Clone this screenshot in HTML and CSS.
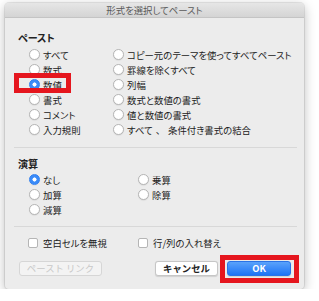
FILE: index.html
```html
<!DOCTYPE html>
<html lang="ja">
<head>
    <meta charset="UTF-8">
    <title>形式を選択してペースト</title>
    <link rel="stylesheet" href="styles.css">
</head>
<body>
    <div class="dialog">
        <div class="titlebar">形式を選択してペースト</div>
        <div class="content">
            <div class="group-label">ペースト</div>
            <div class="paste-grid">
                <div class="col">
                    <div class="opt"><span class="radio"></span>すべて</div>
                    <div class="opt"><span class="radio"></span>数式</div>
                    <div class="opt"><span class="radio on"></span>数値</div>
                    <div class="opt"><span class="radio"></span>書式</div>
                    <div class="opt"><span class="radio"></span>コメント</div>
                    <div class="opt"><span class="radio"></span>入力規則</div>
                </div>
                <div class="col">
                    <div class="opt"><span class="radio"></span>コピー元のテーマを使ってすべてペースト</div>
                    <div class="opt"><span class="radio"></span>罫線を除くすべて</div>
                    <div class="opt"><span class="radio"></span>列幅</div>
                    <div class="opt"><span class="radio"></span>数式と数値の書式</div>
                    <div class="opt"><span class="radio"></span>値と数値の書式</div>
                    <div class="opt"><span class="radio"></span>すべて<span class="fw">、</span>条件付き書式の結合</div>
                </div>
            </div>

            <div class="sep"></div>

            <div class="group-label calc-label">演算</div>
            <div class="calc-grid">
                <div class="col">
                    <div class="opt"><span class="radio on"></span>なし</div>
                    <div class="opt"><span class="radio"></span>加算</div>
                    <div class="opt"><span class="radio"></span>減算</div>
                </div>
                <div class="col">
                    <div class="opt"><span class="radio"></span>乗算</div>
                    <div class="opt"><span class="radio"></span>除算</div>
                </div>
            </div>

            <div class="sep sep2"></div>

            <div class="check-row">
                <div class="opt"><span class="check"></span>空白セルを無視</div>
                <div class="opt"><span class="check"></span>行/列の入れ替え</div>
            </div>

            <div class="buttons">
                <button class="btn disabled">ペースト リンク</button>
                <div class="right">
                    <button class="btn">キャンセル</button>
                    <button class="btn primary">OK</button>
                </div>
            </div>
        </div>
        <!-- 注釈の赤枠 -->
        <div class="mark mark-value"></div>
        <div class="mark mark-ok"></div>
    </div>
</body>
</html>
```

FILE: styles.css
```css
body {
    margin: 0;
    background: #ffffff;
    font-family: "Noto Sans CJK JP", "Noto Sans", sans-serif;
    font-size: 9.4px;
    color: #222;
    font-feature-settings: "palt";
}
.dialog {
    position: relative;
    margin: 3px 0 0 5px;
    width: 299px;
    height: 286px;
    background: #ececec;
    border-radius: 4px;
    box-shadow: 0 3px 12px rgba(0, 0, 0, 0.28), 0 0 0 1px rgba(0, 0, 0, 0.08);
    box-sizing: border-box;
}
.titlebar {
    height: 15px;
    line-height: 15px;
    text-align: center;
    color: #5a5a5a;
    background: linear-gradient(#e6e6e6, #d4d4d4);
    border-bottom: 1px solid #c4c4c4;
    border-radius: 4px 4px 0 0;
    box-sizing: border-box;
}
.content {
    padding: 14px 7px 0 9px;
}
.group-label {
    font-size: 10px;
    font-weight: bold;
    line-height: 12px;
    padding-left: 4px;
    margin-bottom: 3px;
}
.paste-grid, .calc-grid {
    display: grid;
    padding-left: 15px;
}
.paste-grid {
    grid-template-columns: 84px 1fr;
}
.calc-grid {
    grid-template-columns: 109px 1fr;
}
.opt {
    display: flex;
    align-items: center;
    height: 15px;
    gap: 3px;
    white-space: nowrap;
}
.fw {
    font-feature-settings: normal;
}
.radio {
    width: 11px;
    height: 11px;
    border-radius: 50%;
    background: #fff;
    border: 1px solid #b5b5b5;
    box-sizing: border-box;
    box-shadow: 0 0.5px 1px rgba(0, 0, 0, 0.1);
    flex: none;
}
.radio.on {
    background: radial-gradient(circle, #fff 0 1.8px, #3a8bf8 2.3px);
    border-color: #2f7ff0;
}
.check {
    width: 10px;
    height: 10px;
    border-radius: 2px;
    background: #fff;
    border: 1px solid #b5b5b5;
    box-sizing: border-box;
    flex: none;
    margin-right: 2px;
}
.sep {
    height: 1px;
    background: #d8d8d8;
    margin-top: 10px;
}
.calc-label {
    margin-top: 10px;
    margin-bottom: 2px;
}
.sep2 {
    margin-top: 9px;
}
.check-row {
    display: grid;
    grid-template-columns: 110px 1fr;
    padding-left: 14px;
    margin-top: 8px;
}
.buttons {
    display: flex;
    justify-content: space-between;
    margin-top: 11px;
    padding-left: 5px;
    padding-right: 6px;
}
.right {
    display: flex;
    gap: 9px;
}
.btn {
    height: 15px;
    padding: 0;
    font-family: inherit;
    font-size: 9.4px;
    font-weight: bold;
    line-height: 13px;
    border: 1px solid #c6c6c6;
    border-radius: 3px;
    background: #fff;
    color: #222;
    box-shadow: 0 0.5px 1px rgba(0, 0, 0, 0.12);
    width: 63px;
}
.btn.disabled {
    width: 83px;
    color: #c8c8c8;
    background: #f3f3f3;
    border-color: #d6d6d6;
    font-weight: normal;
    box-shadow: none;
}
.btn.primary {
    width: 64px;
    color: #fff;
    border-color: #2a73e6;
    background: linear-gradient(#5aa2fb, #1d74f5);
}
.mark {
    position: absolute;
    border: 5px solid #e5161e;
    box-sizing: border-box;
}
.mark-value {
    left: 9px;
    top: 70px;
    width: 57px;
    height: 20px;
}
.mark-ok {
    left: 215px;
    top: 252px;
    width: 79px;
    height: 28px;
}
```
